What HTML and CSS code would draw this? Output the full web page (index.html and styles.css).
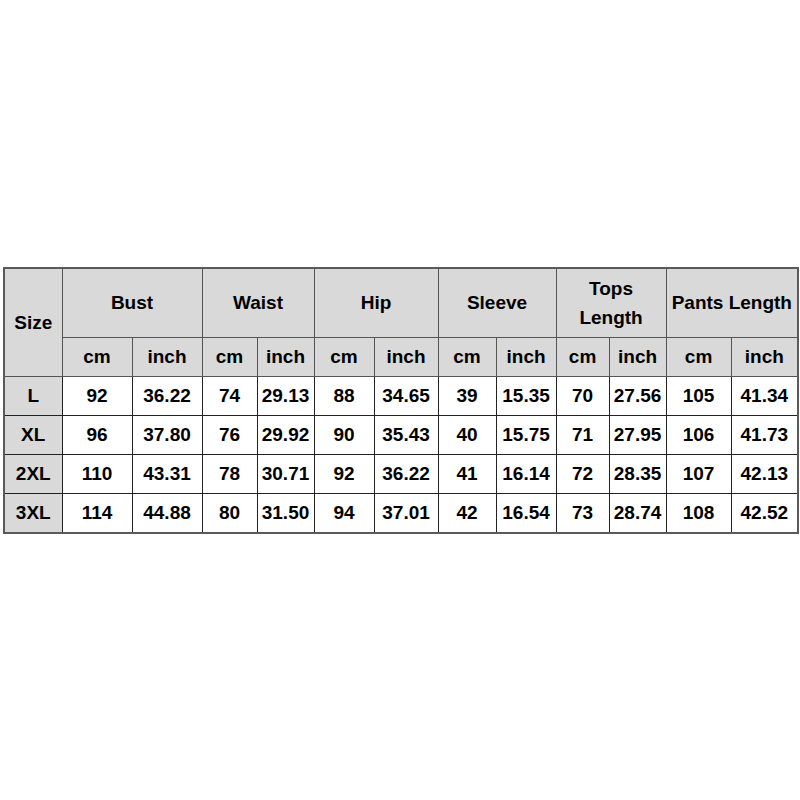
FILE: index.html
```html
<!DOCTYPE html>
<html>
<head>
<meta charset="utf-8">
<link rel="stylesheet" href="styles.css">
</head>
<body>
<table class="size-table">
  <colgroup>
    <col style="width:58px"><col style="width:70px"><col style="width:70px"><col style="width:55px"><col style="width:57px"><col style="width:60px"><col style="width:64px"><col style="width:58px"><col style="width:60px"><col style="width:53px"><col style="width:57px"><col style="width:65px"><col style="width:67px">
  </colgroup>
  <thead>
    <tr class="head1">
      <th rowspan="2" class="size-head">Size</th>
      <th colspan="2">Bust</th>
      <th colspan="2">Waist</th>
      <th colspan="2">Hip</th>
      <th colspan="2">Sleeve</th>
      <th colspan="2" class="tops">Tops<br>Length</th>
      <th colspan="2">Pants Length</th>
    </tr>
    <tr class="head2">
      <th>cm</th><th>inch</th><th>cm</th><th>inch</th><th>cm</th><th>inch</th><th>cm</th><th>inch</th><th>cm</th><th>inch</th><th>cm</th><th>inch</th>
    </tr>
  </thead>
  <tbody>
    <tr><th>L</th><td>92</td><td>36.22</td><td>74</td><td>29.13</td><td>88</td><td>34.65</td><td>39</td><td>15.35</td><td>70</td><td>27.56</td><td>105</td><td>41.34</td></tr>
    <tr><th>XL</th><td>96</td><td>37.80</td><td>76</td><td>29.92</td><td>90</td><td>35.43</td><td>40</td><td>15.75</td><td>71</td><td>27.95</td><td>106</td><td>41.73</td></tr>
    <tr><th>2XL</th><td>110</td><td>43.31</td><td>78</td><td>30.71</td><td>92</td><td>36.22</td><td>41</td><td>16.14</td><td>72</td><td>28.35</td><td>107</td><td>42.13</td></tr>
    <tr><th>3XL</th><td>114</td><td>44.88</td><td>80</td><td>31.50</td><td>94</td><td>37.01</td><td>42</td><td>16.54</td><td>73</td><td>28.74</td><td>108</td><td>42.52</td></tr>
  </tbody>
</table>
</body>
</html>
```
FILE: styles.css
```css
html, body {
  margin: 0;
  padding: 0;
  background: #ffffff;
}
body {
  padding: 267px 0 0 3px;
  font-family: "Liberation Sans", Arial, sans-serif;
}
.size-table {
  border-collapse: collapse;
  table-layout: fixed;
  width: 794px;
  border: 2px solid #5a5a5a;
  font-size: 19px;
  font-weight: bold;
  color: #000;
}
.size-table th,
.size-table td {
  border: 1px solid #222;
  text-align: center;
  vertical-align: middle;
  padding: 0;
  font-weight: bold;
}
.size-table thead th {
  background: #d9d9d9;
  border-color: #555;
}
.size-table tbody th {
  background: #d9d9d9;
}
.head1 th {
  height: 68px;
}
.size-head {
  padding-top: 4px;
}
.tops {
  line-height: 29px;
}
.head2 th {
  height: 38px;
}
.size-table tbody th,
.size-table tbody td {
  height: 38px;
}
```
